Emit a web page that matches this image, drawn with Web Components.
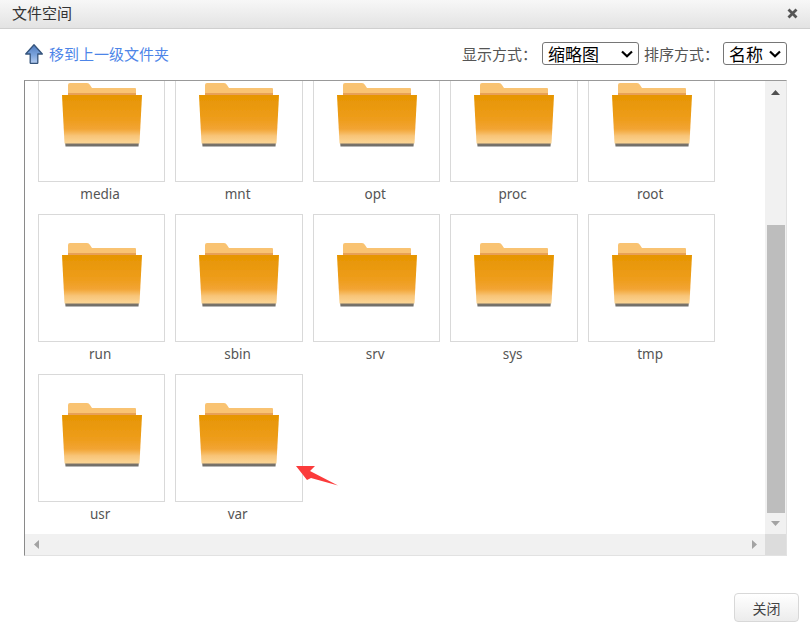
<!DOCTYPE html>
<html lang="zh">
<head>
<meta charset="utf-8">
<title>文件空间</title>
<style>
  html, body { margin: 0; padding: 0; background: #fff; }
  body { font-family: "Noto Sans", "Noto Sans CJK SC", sans-serif; overflow: hidden; }
</style>
</head>
<body>
<file-dialog heading="文件空间">
  <folder-item name="media"></folder-item>
  <folder-item name="mnt"></folder-item>
  <folder-item name="opt"></folder-item>
  <folder-item name="proc"></folder-item>
  <folder-item name="root"></folder-item>
  <folder-item name="run"></folder-item>
  <folder-item name="sbin"></folder-item>
  <folder-item name="srv"></folder-item>
  <folder-item name="sys"></folder-item>
  <folder-item name="tmp"></folder-item>
  <folder-item name="usr"></folder-item>
  <folder-item name="var"></folder-item>
</file-dialog>

<script>
const folderTemplate = document.createElement('template')
folderTemplate.innerHTML = `
<style>
  :host { display: block; width: 127.5px; height: 160px; }
  .thumb {
    box-sizing: border-box;
    height: 128px;
    border: 1px solid #d9d9d9;
    display: flex;
    justify-content: center;
    padding-top: 27px;
  }
  svg { display: block; }
  .name {
    height: 24px;
    line-height: 24px;
    padding-right: 3px;
    text-align: center;
    font-size: 13.5px;
    color: #555;
  }
</style>
<div class="thumb">
  <svg width="84" height="66" viewBox="0 0 84 66">
    <defs>
      <linearGradient id="front" x1="0" y1="0" x2="0" y2="1">
        <stop offset="0" stop-color="#e69500"/>
        <stop offset="0.5" stop-color="#ee9d1c"/>
        <stop offset="0.7" stop-color="#f2a433"/>
        <stop offset="0.84" stop-color="#f8c477"/>
        <stop offset="1" stop-color="#fbd697"/>
      </linearGradient>
      <linearGradient id="shadow" x1="0" y1="0" x2="0" y2="1">
        <stop offset="0" stop-color="#8a7a62"/>
        <stop offset="1" stop-color="#6d6d6d"/>
      </linearGradient>
      <filter id="soft" x="-5%" y="-5%" width="110%" height="110%">
        <feGaussianBlur stdDeviation="0.45"/>
      </filter>
    </defs>
    <g filter="url(#soft)">
      <path d="M8 3 Q8 1 10 1 H27 Q29 1 30 3 L32 6 H75 Q76 6 76 7 V14 H8 Z" fill="#f9c372"/>
      <rect x="8" y="11" width="68" height="2.5" fill="#e8a057"/>
      <path d="M5 59 H79 L78.500 64.500 H5.500 Z" fill="url(#shadow)"/>
      <path d="M2 13 H82 L79.500 61.500 H4.500 Z" fill="url(#front)"/>
    </g>
  </svg>
</div>
<div class="name"></div>
`

class FolderItem extends HTMLElement {
  constructor() {
    super()
    this.attachShadow({ mode: 'open' })
    this.shadowRoot.appendChild(folderTemplate.content.cloneNode(true))
  }

  connectedCallback() {
    this.shadowRoot.querySelector('.name').textContent = this.getAttribute('name')
  }
}
customElements.define('folder-item', FolderItem)


const scrollTemplate = document.createElement('template')
scrollTemplate.innerHTML = `
<style>
  :host { display: flex; background: #f1f1f1; min-height: 0; overflow: hidden; }
  :host([dir-axis="v"]) { flex-direction: column; }
  .btn { flex: none; display: flex; align-items: center; justify-content: center; }
  :host([dir-axis="v"]) .btn { height: 22px; }
  :host([dir-axis="h"]) .btn { width: 22px; }
  .track { flex: 1; display: flex; min-width: 0; min-height: 0; }
  :host([dir-axis="v"]) .track { flex-direction: column; }
  .before, .thumb { flex: none; }
  .thumb { background: #bdbdbd; margin: 0 1px 0 2px; }
</style>
<div class="btn start"></div>
<div class="track"><div class="before"></div><div class="thumb"></div></div>
<div class="btn end"></div>
`

const arrows = {
  up: ['#505050', '0,5 4.500,0 9,5', 9, 5],
  down: ['#a3a3a3', '0,0 9,0 4.500,5', 9, 5],
  left: ['#a3a3a3', '5,0 5,9 0,4.500', 5, 9],
  right: ['#a3a3a3', '0,0 5,4.500 0,9', 5, 9]
}

function arrowSvg(name) {
  const [color, points, w, h] = arrows[name]
  return `<svg width="${w}" height="${h}" viewBox="0 0 ${w} ${h}"><polygon points="${points}" fill="${color}"/></svg>`
}

class ScrollBar extends HTMLElement {
  constructor() {
    super()
    this.attachShadow({ mode: 'open' })
    this.shadowRoot.appendChild(scrollTemplate.content.cloneNode(true))
  }

  connectedCallback() {
    const vertical = this.getAttribute('dir-axis') === 'v'
    this.shadowRoot.querySelector('.start').innerHTML = arrowSvg(vertical ? 'up' : 'left')
    this.shadowRoot.querySelector('.end').innerHTML = arrowSvg(vertical ? 'down' : 'right')
    if (vertical) {
      this.shadowRoot.querySelector('.before').style.height = this.getAttribute('offset') + 'px'
      this.shadowRoot.querySelector('.thumb').style.height = this.getAttribute('size') + 'px'
    }
  }
}
customElements.define('scroll-bar', ScrollBar)


const chevron = "url(\"data:image/svg+xml,%3Csvg xmlns='http://www.w3.org/2000/svg' width='12' height='8' viewBox='0 0 12 8'%3E%3Cpath d='M1 1.500 L6 6.300 L11 1.500' fill='none' stroke='%23000' stroke-width='2.200'/%3E%3C/svg%3E\")"

const dialogTemplate = document.createElement('template')
dialogTemplate.innerHTML = `
<style>
  :host {
    display: flex;
    flex-direction: column;
    position: relative;
    width: 810px;
    height: 636px;
    font-family: "Noto Sans", "Noto Sans CJK SC", sans-serif;
    color: #333;
    background: #fff;
  }
  .title {
    box-sizing: border-box;
    flex: none;
    height: 29px;
    display: flex;
    align-items: center;
    justify-content: space-between;
    padding: 0 12px 2px 12px;
    font-size: 15px;
    line-height: 20px;
    background: linear-gradient(#f7f7f7, #e3e3e3);
    border-bottom: 1px solid #cfcfcf;
  }
  .toolbar {
    box-sizing: border-box;
    flex: none;
    height: 51px;
    display: flex;
    align-items: center;
    justify-content: space-between;
    padding: 0 23px 2px 25px;
  }
  .up {
    display: flex;
    align-items: center;
    gap: 6px;
    font-size: 15px;
    line-height: 20px;
    color: #4d85e8;
  }
  .options {
    display: flex;
    align-items: center;
    font-size: 15px;
    line-height: 20px;
    color: #555;
  }
  select {
    box-sizing: border-box;
    appearance: none;
    height: 23px;
    padding: 0 0 0 5px;
    font: 17px/21px "Noto Sans CJK SC", sans-serif;
    color: #000;
    background: #fff ${chevron} no-repeat right 5px center;
    border: 1px solid #767676;
    border-radius: 3px;
  }
  .mode { width: 97px; margin: 0 5px 0 5px; }
  .sort { width: 64px; margin-left: 4px; }
  .panel {
    box-sizing: border-box;
    flex: none;
    height: 476px;
    margin: 0 23px 0 24px;
    display: grid;
    grid-template-columns: 1fr 21px;
    grid-template-rows: 453px 21px;
    border: 1px solid #e2e2e2;
    border-top-color: #999;
    border-left-color: #8a8a8a;
  }
  .view { overflow: hidden; min-height: 0; }
  .grid {
    display: grid;
    grid-template-columns: repeat(5, 127.5px);
    column-gap: 10px;
    margin: -27px 0 0 12.900px;
  }
  .corner { background: #dcdcdc; }
  .footer {
    flex: 1;
    display: flex;
    justify-content: flex-end;
    align-items: flex-start;
    padding: 37px 11px 0 0;
  }
  button {
    box-sizing: border-box;
    width: 65px;
    height: 29px;
    padding: 0;
    font: 14px "Noto Sans CJK SC", sans-serif;
    color: #444;
    background: linear-gradient(#ffffff, #ececec);
    border: 1px solid #d8d8d8;
    border-radius: 4px;
  }
  .pointer { position: absolute; left: 296px; top: 465px; }
</style>
<div class="title">
  <span class="heading"></span>
  <svg width="11" height="11" viewBox="0 0 11 11"><path d="M1.500 1.500 L9.500 9.500 M9.500 1.500 L1.500 9.500" stroke="#555" stroke-width="2.800" fill="none"/></svg>
</div>
<div class="toolbar">
  <div class="up">
    <svg width="18" height="20" viewBox="0 0 18 20">
      <defs>
        <linearGradient id="upfill" x1="0" y1="0" x2="0" y2="1">
          <stop offset="0" stop-color="#4f7cc0"/>
          <stop offset="0.55" stop-color="#7ba3dc"/>
          <stop offset="1" stop-color="#b6cdf0"/>
        </linearGradient>
      </defs>
      <path d="M9 0.800 L17.300 10 H12.800 V18.800 Q12.800 19.400 12.200 19.400 H5.800 Q5.200 19.400 5.200 18.800 V10 H0.700 Z" fill="url(#upfill)" stroke="#35547c" stroke-width="1.300" stroke-linejoin="round"/>
    </svg>
    <span>移到上一级文件夹</span>
  </div>
  <div class="options">
    <span>显示方式：</span>
    <select class="mode"><option>缩略图</option><option>列表</option></select>
    <span>排序方式：</span>
    <select class="sort"><option>名称</option><option>日期</option></select>
  </div>
</div>
<div class="panel">
  <div class="view"><div class="grid"><slot></slot></div></div>
  <scroll-bar dir-axis="v" offset="122" size="288"></scroll-bar>
  <scroll-bar dir-axis="h"></scroll-bar>
  <div class="corner"></div>
</div>
<div class="footer"><button>关闭</button></div>
<svg class="pointer" width="44" height="22" viewBox="0 0 44 22">
  <polygon points="0,1 19,1 14,6 42,20.500 15,13 11,15" fill="#fb3b3b"/>
</svg>
`

class FileDialog extends HTMLElement {
  constructor() {
    super()
    this.attachShadow({ mode: 'open' })
    this.shadowRoot.appendChild(dialogTemplate.content.cloneNode(true))
  }

  connectedCallback() {
    this.shadowRoot.querySelector('.heading').textContent = this.getAttribute('heading')
  }
}
customElements.define('file-dialog', FileDialog)
</script>
</body>
</html>
